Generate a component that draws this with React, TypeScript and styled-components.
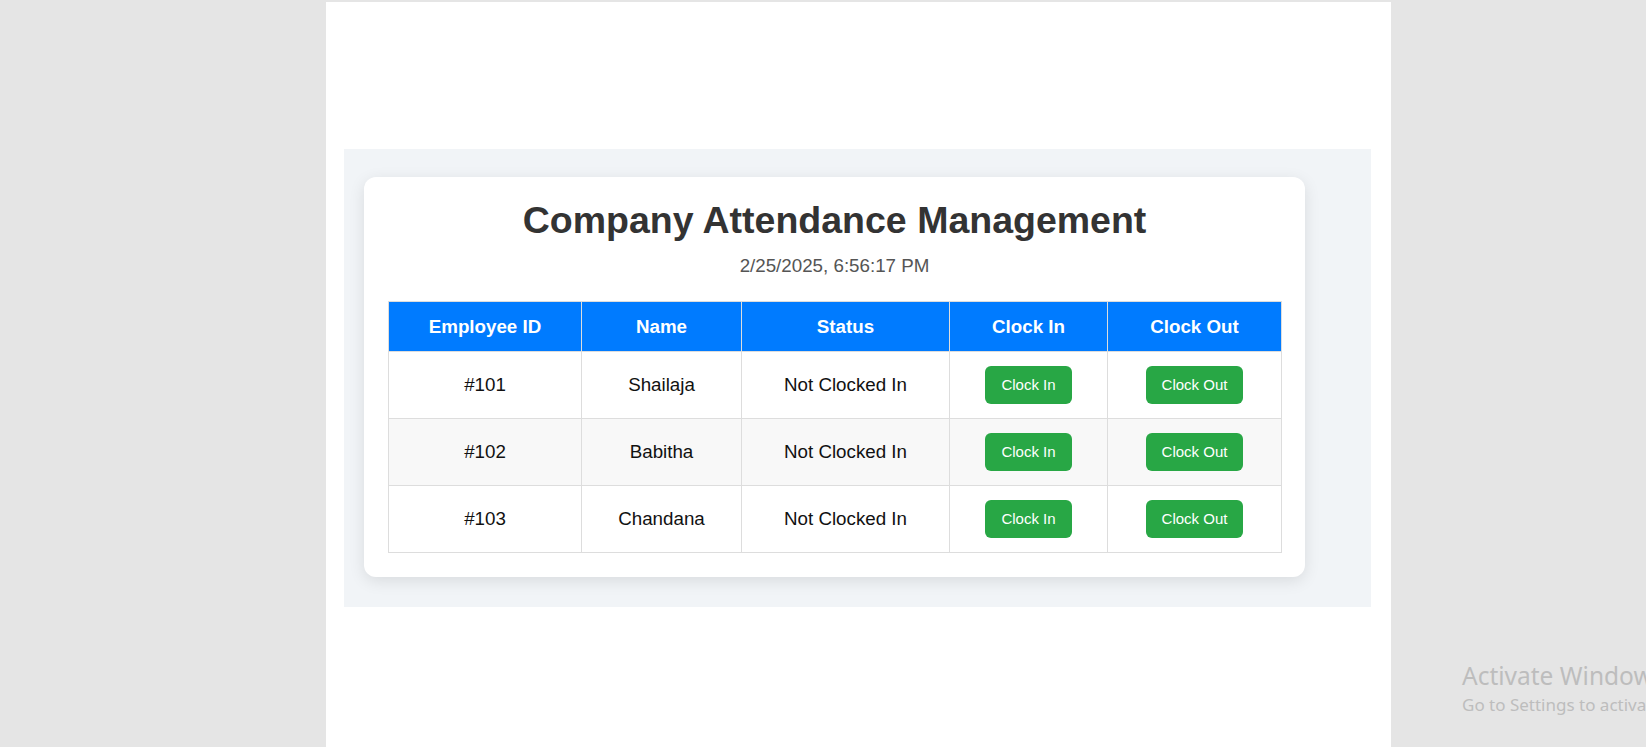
import React from "react";
import styled, { createGlobalStyle } from "styled-components";

const GlobalStyle = createGlobalStyle`
  html, body {
    margin: 0;
    padding: 0;
    background: #e5e5e5;
    font-family: "Liberation Sans", Arial, sans-serif;
    overflow: hidden;
  }
`;

const Screen = styled.div`
  position: relative;
  width: 1646px;
  height: 747px;
  overflow: hidden;
`;

const Page = styled.div`
  margin: 2px 0 0 326px;
  width: 1065px;
  height: 745px;
  box-sizing: border-box;
  background: #ffffff;
  padding: 147px 20px 0 18px;
`;

const Section = styled.section`
  width: 1027px;
  box-sizing: border-box;
  background: #f1f4f7;
  padding: 28px 20px 30px;
`;

const Card = styled.div`
  width: 941px;
  box-sizing: border-box;
  background: #ffffff;
  border-radius: 12px;
  box-shadow: 0 4px 16px rgba(0, 0, 0, 0.1);
  padding: 22px 24px 24px;
  text-align: center;
`;

const Title = styled.h1`
  margin: 0 0 13px;
  font-size: 37.5px;
  line-height: 43px;
  font-weight: 700;
  color: #333333;
`;

const DateLine = styled.p`
  margin: 0 0 24px;
  font-size: 18.75px;
  line-height: 22px;
  color: #555555;
`;

const Table = styled.table`
  width: 893px;
  border-collapse: collapse;
  table-layout: fixed;
`;

const HeadCell = styled.th`
  height: 50px;
  padding: 0;
  box-sizing: border-box;
  border: 1px solid #dddddd;
  background: #007bff;
  color: #ffffff;
  font-size: 18.75px;
  font-weight: 700;
  text-align: center;
`;

const Row = styled.tr<{ $alt?: boolean }>`
  background: ${(p) => (p.$alt ? "#f8f8f8" : "#ffffff")};
`;

const Cell = styled.td`
  height: 67px;
  padding: 0;
  box-sizing: border-box;
  border: 1px solid #dddddd;
  font-size: 18.75px;
  color: #111111;
  text-align: center;
  vertical-align: middle;
`;

const ActionButton = styled.button`
  height: 38px;
  padding: 0 16px;
  border: none;
  border-radius: 6px;
  background: #28a745;
  color: #ffffff;
  font-family: "Liberation Sans", Arial, sans-serif;
  font-size: 15px;
  line-height: 38px;
  cursor: pointer;
  vertical-align: middle;
`;

const Watermark = styled.div`
  position: absolute;
  left: 1462px;
  top: 660px;
  color: #bdbdbd;
  font-family: "Noto Sans", "Open Sans", sans-serif;
  white-space: nowrap;
  pointer-events: none;
`;

const WatermarkTitle = styled.div`
  font-size: 24.5px;
  line-height: 32px;
`;

const WatermarkSub = styled.div`
  font-size: 17px;
  line-height: 26px;
`;

const columns = [
  { label: "Employee ID", width: 193 },
  { label: "Name", width: 160 },
  { label: "Status", width: 208 },
  { label: "Clock In", width: 158 },
  { label: "Clock Out", width: 174 },
];

const employees = [
  { id: "#101", name: "Shailaja", status: "Not Clocked In" },
  { id: "#102", name: "Babitha", status: "Not Clocked In" },
  { id: "#103", name: "Chandana", status: "Not Clocked In" },
];

export default function App() {
  return (
    <Screen>
      <GlobalStyle />
      <Page>
        <Section>
          <Card>
            <Title>Company Attendance Management</Title>
            <DateLine>2/25/2025, 6:56:17 PM</DateLine>
            <Table>
              <colgroup>
                {columns.map((c) => (
                  <col key={c.label} style={{ width: c.width }} />
                ))}
              </colgroup>
              <thead>
                <tr>
                  {columns.map((c) => (
                    <HeadCell key={c.label}>{c.label}</HeadCell>
                  ))}
                </tr>
              </thead>
              <tbody>
                {employees.map((e, i) => (
                  <Row key={e.id} $alt={i % 2 === 1}>
                    <Cell>{e.id}</Cell>
                    <Cell>{e.name}</Cell>
                    <Cell>{e.status}</Cell>
                    <Cell>
                      <ActionButton>Clock In</ActionButton>
                    </Cell>
                    <Cell>
                      <ActionButton>Clock Out</ActionButton>
                    </Cell>
                  </Row>
                ))}
              </tbody>
            </Table>
          </Card>
        </Section>
      </Page>
      <Watermark>
        <WatermarkTitle>Activate Windows</WatermarkTitle>
        <WatermarkSub>Go to Settings to activate Windows.</WatermarkSub>
      </Watermark>
    </Screen>
  );
}
